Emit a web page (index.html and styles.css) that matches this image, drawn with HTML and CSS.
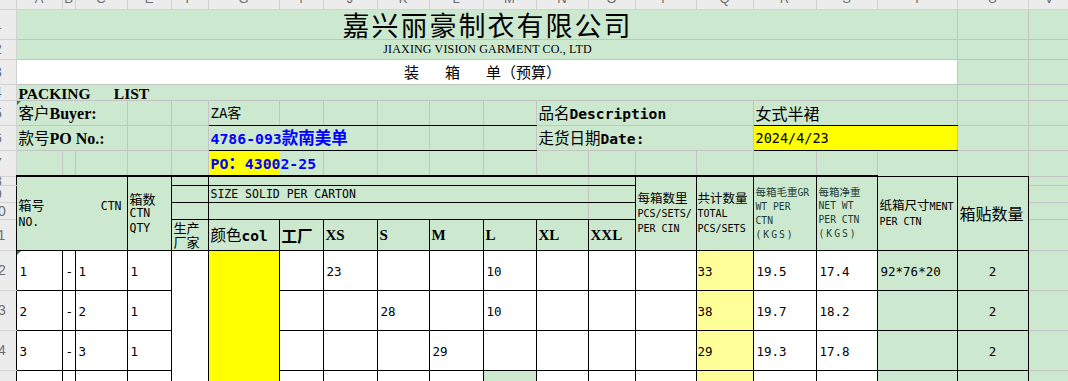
FILE: index.html
```html
<!DOCTYPE html>
<html lang="zh-CN">
<head>
<meta charset="utf-8">
<title>装箱单（预算）</title>
<link rel="stylesheet" href="styles.css">
</head>
<body>
<table class="sheet">
<colgroup>
<col class="c-rh"><col class="c-a"><col class="c-b"><col class="c-c"><col class="c-e"><col class="c-f"><col class="c-g"><col class="c-i"><col class="c-j"><col class="c-k"><col class="c-l"><col class="c-m"><col class="c-n"><col class="c-o"><col class="c-p"><col class="c-q"><col class="c-r"><col class="c-s"><col class="c-t"><col class="c-u"><col class="c-v">
</colgroup>
<tr class="h0">
<th class="corner"></th>
<th class="ch"><span>A</span></th><th class="ch"><span>B</span></th><th class="ch"><span>C</span></th><th class="ch"><span>E</span></th><th class="ch"><span>F</span></th><th class="ch"><span>G</span></th><th class="ch"><span>I</span></th><th class="ch"><span>J</span></th><th class="ch"><span>K</span></th><th class="ch"><span>L</span></th><th class="ch"><span>M</span></th><th class="ch"><span>N</span></th><th class="ch"><span>O</span></th><th class="ch"><span>P</span></th><th class="ch"><span>Q</span></th><th class="ch"><span>R</span></th><th class="ch"><span>S</span></th><th class="ch"><span>T</span></th><th class="ch"><span>U</span></th><th class="ch"><span>V</span></th>
</tr>
<tr class="h1">
<th class="rh"><div class="rn">1</div></th>
<td colspan="18" class="title">嘉兴丽豪制衣有限公司</td><td></td><td></td>
</tr>
<tr class="h2">
<th class="rh"><div class="rn">2</div></th>
<td colspan="18" class="en">JIAXING VISION GARMENT CO., LTD</td><td></td><td></td>
</tr>
<tr class="h3">
<th class="rh"><div class="rn">3</div></th>
<td colspan="18" class="sub wh"><span class="gap">装</span><span class="gap">箱</span>单（预算）</td><td></td><td></td>
</tr>
<tr class="h4">
<th class="rh"><div class="rn">4</div></th>
<td colspan="18" class="pl">PACKING      LIST</td><td></td><td></td>
</tr>
<tr class="h5">
<th class="rh"><div class="rn">5</div></th>
<td colspan="3" class="lbl mark">客户<b class="ser">Buyer:</b></td><td></td><td></td>
<td class="ul za">ZA客</td><td class="ul"></td><td class="ul"></td><td class="ul"></td><td class="ul"></td><td class="ul"></td>
<td colspan="4" class="lbl">品名<b class="mb">Description</b></td>
<td colspan="3" class="ul prod">女式半裙</td><td></td><td></td>
</tr>
<tr class="h6">
<th class="rh"><div class="rn">6</div></th>
<td colspan="3" class="lbl">款号<b class="ser">PO No.:</b></td><td></td><td></td>
<td colspan="3" class="ul blue"><span class="bn">4786-093</span>款南美单</td><td class="ul"></td><td class="ul"></td><td class="ul"></td>
<td colspan="4" class="lbl">走货日期<b class="mb">Date:</b></td>
<td colspan="3" class="ul yl date">2024/4/23</td><td></td><td></td>
</tr>
<tr class="h7">
<th class="rh"><div class="rn">7</div></th>
<td class="tk"></td><td class="tk"></td><td class="tk"></td><td class="tk"></td><td class="tk"></td>
<td class="tk yl blue po"><span class="bn">PO</span>：<span class="bn">43002-25</span></td>
<td class="tk"></td><td class="tk"></td><td class="tk"></td><td class="tk"></td><td class="tk"></td><td class="tk"></td><td class="tk"></td><td class="tk"></td><td class="tk"></td><td class="tk"></td><td class="tk"></td>
<td class="ul"></td><td class="ul"></td><td></td>
</tr>
<tr class="h8">
<th class="rh rb"><div class="rn">8</div></th>
<td rowspan="4" colspan="3" class="k hA">
<div class="hA-l1"><span class="c13">箱号</span><span class="m11">CTN</span></div>
<div class="m11">NO.</div>
</td>
<td rowspan="4" class="k hE"><div class="c13">箱数</div><div>CTN</div><div>QTY</div></td>
<td class="k"></td>
<td colspan="7" class="k gr"></td>
<td class="k"></td>
<td rowspan="4" class="k hP"><div class="c12">每箱数里</div><div>PCS/SETS/</div><div>PER CIN</div></td>
<td rowspan="4" class="k hP q"><div class="c12">共计数量</div><div>TOTAL</div><div>PCS/SETS</div></td>
<td rowspan="4" class="k hR"><div><span class="c105">每箱毛重</span>GR</div><div>WT PER</div><div>CTN</div><div class="kgs">(KGS)</div></td>
<td rowspan="4" class="k hR"><div class="c105">每箱净重</div><div>NET WT</div><div>PER CTN</div><div class="kgs">(KGS)</div></td>
<td rowspan="4" class="k hT"><div><span class="c12">纸箱尺寸</span>MENT</div><div>PER CTN</div></td>
<td rowspan="4" class="k hU">箱贴数量</td>
<td></td>
</tr>
<tr class="h9">
<th class="rh rb"><div class="rn">9</div></th>
<td class="k"></td>
<td colspan="7" class="k gr size">SIZE SOLID PER CARTON</td>
<td class="k"></td>
<td></td>
</tr>
<tr class="h10">
<th class="rh rb"><div class="rn">10</div></th>
<td class="k"></td>
<td colspan="7" class="k gr"></td>
<td class="k"></td>
<td></td>
</tr>
<tr class="h11">
<th class="rh rb"><div class="rn">11</div></th>
<td class="k maker">生产厂家</td>
<td class="k color">颜色<b class="mb2">col</b></td>
<td class="k fac">工厂</td>
<td class="k sz">XS</td><td class="k sz">S</td><td class="k sz">M</td><td class="k sz">L</td><td class="k sz">XL</td><td class="k sz">XXL</td>
<td></td>
</tr>
<tr class="h12 data">
<th class="rh rb"><div class="rn">12</div></th>
<td class="mark">1</td><td>-</td><td>1</td><td>1</td>
<td rowspan="4"></td><td rowspan="4" class="yl"></td>
<td></td><td>23</td><td></td><td></td><td>10</td><td></td><td></td><td></td>
<td class="py q">33</td><td>19.5</td><td>17.4</td><td class="gn">92*76*20</td><td class="gn ctr">2</td><td class="v"></td>
</tr>
<tr class="h13 data">
<th class="rh rb"><div class="rn">13</div></th>
<td>2</td><td>-</td><td>2</td><td>1</td>
<td></td><td></td><td>28</td><td></td><td>10</td><td></td><td></td><td></td>
<td class="py q">38</td><td>19.7</td><td>18.2</td><td class="gn"></td><td class="gn ctr">2</td><td class="v"></td>
</tr>
<tr class="h14 data">
<th class="rh rb"><div class="rn">14</div></th>
<td>3</td><td>-</td><td>3</td><td>1</td>
<td></td><td></td><td></td><td>29</td><td></td><td></td><td></td><td></td>
<td class="py q">29</td><td>19.3</td><td>17.8</td><td class="gn"></td><td class="gn ctr">2</td><td class="v"></td>
</tr>
<tr class="h15 data">
<th class="rh rb"><div class="rn">15</div></th>
<td></td><td></td><td></td><td></td>
<td></td><td></td><td></td><td></td><td class="gn"></td><td></td><td></td><td></td>
<td class="py q"></td><td></td><td></td><td class="gn"></td><td class="gn"></td><td class="v"></td>
</tr>
</table>
</body>
</html>
```
FILE: styles.css
```css
html, body {
  margin: 0;
  padding: 0;
  overflow: hidden;
  background: #ffffff;
}

.sheet {
  border-collapse: collapse;
  table-layout: fixed;
  width: 1070px;
  font-family: "DejaVu Sans Mono", "Noto Sans CJK SC", monospace;
  font-size: 13px;
  color: #000;
}

/* column widths */
.c-rh { width: 16px; }
.c-a { width: 46px; }
.c-b { width: 13px; }
.c-c { width: 52px; }
.c-e { width: 44px; }
.c-f { width: 37px; }
.c-g { width: 71px; }
.c-i { width: 44px; }
.c-j { width: 54px; }
.c-k { width: 52px; }
.c-l { width: 54px; }
.c-m { width: 53px; }
.c-n { width: 52px; }
.c-o { width: 47px; }
.c-p { width: 61px; }
.c-q { width: 57px; }
.c-r { width: 63px; }
.c-s { width: 61px; }
.c-t { width: 80px; }
.c-u { width: 71px; }
.c-v { width: 42px; }

/* row heights */
.h0 { height: 9px; }
.h1 { height: 29px; }
.h2 { height: 20px; }
.h3 { height: 25px; }
.h4 { height: 16px; }
.h5 { height: 25px; }
.h6 { height: 25px; }
.h7 { height: 26px; }
.h8 { height: 8px; }
.h9 { height: 17px; }
.h10 { height: 17px; }
.h11 { height: 31px; }
.h12, .h13, .h14, .h15 { height: 40px; }

/* row / column headers */
th {
  padding: 0;
  font-weight: normal;
  background: #ececec;
  border: 1px solid #d2d2d2;
  color: #6e6e6e;
  font-family: "Liberation Sans", sans-serif;
}
th.corner { border-top: none; border-left: none; }
th.ch { border-top: none; font-size: 13px; vertical-align: top; text-align: center; }
.ch span { display: block; height: 9px; line-height: 9px; margin-top: -6px; }
th.rh { border-left: none; vertical-align: middle; }
th.rb { border-right-color: #000; }
.rn {
  width: 30px;
  margin-left: -17px;
  text-align: center;
  font-size: 14px;
  line-height: 8px;
  white-space: nowrap;
}

/* cells: base */
td {
  padding: 0 0 0 2px;
  border: 1px solid #c4c4c4;
  background: #cce8cf;
  white-space: nowrap;
  vertical-align: middle;
  line-height: 16px;
}
.data td {
  background: #fff;
  border-color: #000;
  font-size: 12.5px;
  padding-left: 3px;
  padding-top: 3px;
}

/* cells: modifiers */
td.k { border-color: #000; }
td.ul { border-bottom-color: #000; }
td.tk { border-bottom: 2px solid #000; }
td.wh { background: #fff; }
td.yl { background: #ffff00; }
td.py { background: #ffff99; }
td.gn { background: #cce8cf; }
td.gr { border-right-color: #c4c4c4; }
td.v {
  background: #cce8cf;
  border-top-color: #c4c4c4;
  border-bottom-color: #c4c4c4;
  border-right-color: #c4c4c4;
}
td.q { padding-left: 1px; }
td.ctr { text-align: center; padding-left: 0; }

td.mark { position: relative; }
td.mark::before {
  content: "";
  position: absolute;
  left: 0;
  top: 0;
  border-top: 4px solid #1c8c2c;
  border-right: 4px solid transparent;
}

/* title block */
td.title {
  font-family: "Noto Sans CJK SC", sans-serif;
  font-size: 27px;
  letter-spacing: 2px;
  text-align: center;
  vertical-align: bottom;
  line-height: 29px;
}
td.en {
  font-family: "Liberation Serif", serif;
  font-size: 12px;
  letter-spacing: 0.15px;
  text-align: center;
}
td.sub {
  font-family: "Noto Sans CJK SC", sans-serif;
  font-size: 15px;
  text-align: center;
  padding-right: 10px;
}
.gap { margin-right: 26px; }
td.pl {
  font-family: "Liberation Serif", serif;
  font-weight: bold;
  font-size: 15.5px;
  white-space: pre;
  vertical-align: bottom;
  line-height: 12px;
}

/* info rows */
td.lbl {
  font-family: "Noto Sans CJK SC", sans-serif;
  font-size: 15.5px;
  line-height: 20px;
}
.ser { font-family: "Liberation Serif", serif; font-weight: bold; font-size: 16px; }
.mb { font-family: "DejaVu Sans Mono", monospace; font-weight: bold; font-size: 14.6px; }
td.za { font-size: 14px; }
td.prod { font-family: "Noto Sans CJK SC", sans-serif; font-size: 16px; }
td.blue { color: #0000ff; font-weight: bold; font-family: "Noto Sans CJK SC", sans-serif; font-size: 16.5px; }
.bn { font-family: "DejaVu Sans Mono", monospace; font-size: 14.8px; }
td.date { font-size: 13.5px; }
td.po { border-right-style: hidden; }

/* table head */
td.hA { font-size: 11.5px; line-height: 16px; }
.hA-l1 { display: flex; justify-content: space-between; align-items: baseline; padding-right: 5px; }
.c13 { font-family: "Noto Sans CJK SC", sans-serif; font-size: 13px; }
.c12 { font-family: "Noto Sans CJK SC", sans-serif; font-size: 12.5px; }
.c105 { font-family: "Noto Sans CJK SC", sans-serif; font-size: 10.5px; }
.m11 { font-size: 11.5px; }
td.hE { font-size: 11.5px; line-height: 15px; }
td.hP { font-size: 10px; line-height: 15.5px; }
td.hR { font-size: 9.7px; line-height: 14px; color: #1f3d36; }
.kgs { letter-spacing: 2px; }
td.hT { font-size: 10px; line-height: 15px; }
td.hU { font-family: "Noto Sans CJK SC", sans-serif; font-size: 16px; }
td.size { font-size: 11.5px; }
td.maker {
  font-family: "Noto Sans CJK SC", sans-serif;
  font-size: 13px;
  line-height: 14px;
  white-space: normal;
  overflow: hidden;
}
td.color { font-family: "Noto Sans CJK SC", sans-serif; font-size: 15.5px; }
.mb2 { font-family: "DejaVu Sans Mono", monospace; font-weight: bold; font-size: 14.5px; }
td.fac { font-family: "Noto Sans CJK SC", sans-serif; font-weight: bold; font-size: 15.5px; }
td.sz { font-family: "Liberation Serif", serif; font-weight: bold; font-size: 15px; }
```
